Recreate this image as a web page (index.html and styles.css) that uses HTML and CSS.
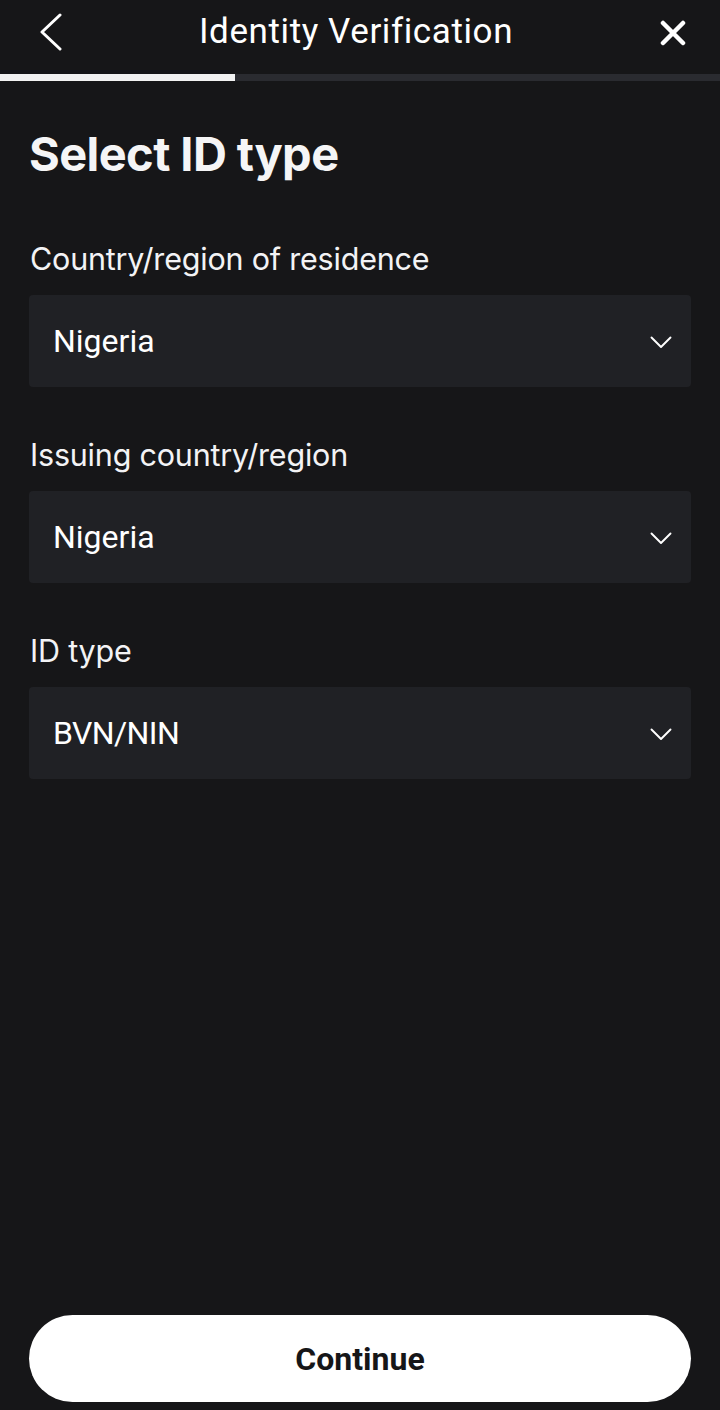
FILE: index.html
```html
<!DOCTYPE html>
<html>
<head>
<meta charset="utf-8">
<link rel="stylesheet" href="styles.css">
</head>
<body>
<div class="screen">
  <header class="topbar">
    <button class="icon-btn back" aria-label="Back">
      <svg width="26" height="38" viewBox="0 0 26 38"><path d="M22 2 L4 19 L22 36" fill="none" stroke="#fff" stroke-width="3" stroke-linecap="round" stroke-linejoin="round"/></svg>
    </button>
    <div class="title">Identity Verification</div>
    <button class="icon-btn close" aria-label="Close">
      <svg width="26" height="26" viewBox="0 0 26 26"><path d="M3 3 L23 23 M23 3 L3 23" fill="none" stroke="#fff" stroke-width="4.5" stroke-linecap="round"/></svg>
    </button>
  </header>
  <div class="progress"><div class="progress-fill"></div></div>

  <main class="content">
    <h1 class="heading">Select ID type</h1>

    <div class="field-group">
      <div class="label">Country/region of residence</div>
      <div class="select"><span>Nigeria</span><svg class="chev" width="22" height="13" viewBox="0 0 22 13"><path d="M1.5 1.5 L11 11 L20.5 1.5" fill="none" stroke="#fff" stroke-width="1.9" stroke-linecap="round" stroke-linejoin="round"/></svg></div>
    </div>

    <div class="field-group">
      <div class="label">Issuing country/region</div>
      <div class="select"><span>Nigeria</span><svg class="chev" width="22" height="13" viewBox="0 0 22 13"><path d="M1.5 1.5 L11 11 L20.5 1.5" fill="none" stroke="#fff" stroke-width="1.9" stroke-linecap="round" stroke-linejoin="round"/></svg></div>
    </div>

    <div class="field-group">
      <div class="label">ID type</div>
      <div class="select"><span class="narrow">BVN/NIN</span><svg class="chev" width="22" height="13" viewBox="0 0 22 13"><path d="M1.5 1.5 L11 11 L20.5 1.5" fill="none" stroke="#fff" stroke-width="1.9" stroke-linecap="round" stroke-linejoin="round"/></svg></div>
    </div>
  </main>

  <footer class="footer">
    <button class="continue">Continue</button>
  </footer>
</div>
</body>
</html>
```

FILE: styles.css
```css
* { box-sizing: border-box; }
html, body { margin: 0; padding: 0; background: #161618; }
body { width: 720px; height: 1410px; overflow: hidden; color: #f5f5f6; font-family: Inter, "Noto Sans", sans-serif; }
.screen { display: flex; flex-direction: column; height: 1410px; }
.topbar { height: 74px; display: flex; align-items: center; justify-content: space-between; padding: 0 34px 0 38px; position: relative; }
.icon-btn { background: none; border: 0; padding: 0; display: flex; align-items: center; justify-content: center; }
.back { margin-top: -10px; }
.close { margin-top: -8px; }
.title { font-family: Roboto, sans-serif; font-size: 35px; color: #fff; margin-top: -12px; margin-right: 12px; letter-spacing: 0.6px; }
.progress { height: 7px; background: #2a2b30; }
.progress-fill { width: 235px; height: 100%; background: #f2f2f2; }
.content { flex: 1; padding: 0 29px; display: flex; flex-direction: column; }
.heading { margin: 43px 0 0 0; font-size: 47px; font-weight: 700; line-height: 60px; letter-spacing: -0.6px; }
.field-group { display: flex; flex-direction: column; margin-top: 55px; }
.field-group + .field-group { margin-top: 48px; }
.label { font-size: 30.5px; line-height: 40px; margin-left: 1px; margin-bottom: 16px; letter-spacing: -0.2px; color: #f3f3f5; }
.select { height: 92px; background: #202125; border-radius: 4px; display: flex; align-items: center; justify-content: space-between; padding: 0 19px 0 24px; font-family: Roboto, sans-serif; font-size: 32px; color: #fff; }
.narrow { letter-spacing: -0.6px; }
.chev { margin-top: 2px; }
.footer { padding: 0 29px 8px; }
.continue { width: 100%; height: 87px; border: 0; border-radius: 44px; background: #fff; color: #161618; font-family: Roboto, sans-serif; font-weight: 700; font-size: 32px; }
```
